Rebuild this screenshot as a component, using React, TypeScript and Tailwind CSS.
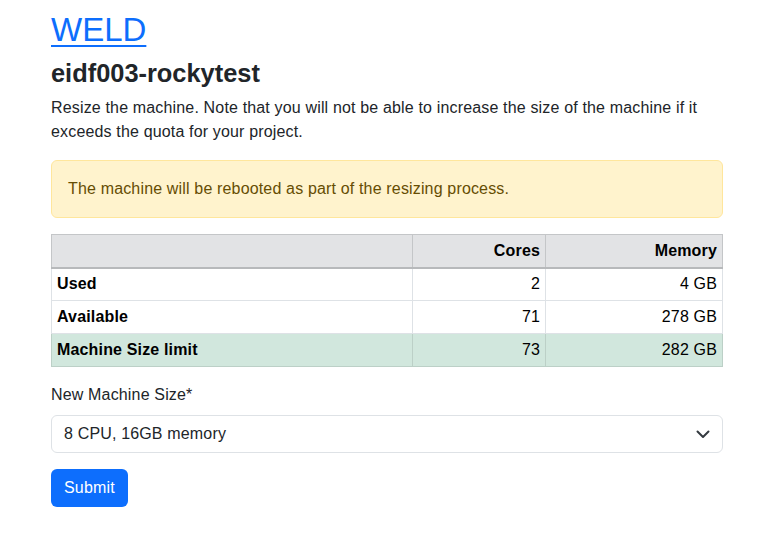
const FONT = "font-['Liberation_Sans','Noto_Sans',sans-serif]";

const rows = [
  { label: "Used", cores: "2", memory: "4 GB", highlight: false },
  { label: "Available", cores: "71", memory: "278 GB", highlight: false },
  { label: "Machine Size limit", cores: "73", memory: "282 GB", highlight: true },
];

const App = () => {
  return (
    <main className={`${FONT} min-h-screen bg-white text-[16px] leading-6 tracking-[0.16px] text-[#212529]`}>
      <div className="ml-[51px] w-[672px] pt-[10px]">
        <h1 className="mb-2 text-[33px] font-medium leading-[1.2] tracking-normal">
          <a href="#" className="text-[#0d6efd] underline decoration-[2px] underline-offset-[4px]">
            WELD
          </a>
        </h1>
        <h3 className="mb-2 text-[25.4px] font-bold leading-[1.2] tracking-normal">eidf003-rockytest</h3>
        <p className="mb-4">
          Resize the machine. Note that you will not be able to increase the size of the machine if it
          exceeds the quota for your project.
        </p>

        <div className="mb-4 rounded-[6px] border border-[#ffe69c] bg-[#fff3cd] p-4 text-[#664d03]">
          The machine will be rebooted as part of the resizing process.
        </div>

        <table className="mb-4 w-full border-collapse border border-[#b7b9bb] text-black">
          <thead>
            <tr className="bg-[#e2e3e5]">
              <th className="h-[33px] w-[361px] border border-[#c4c6c8] px-[5px]"></th>
              <th className="w-[133px] border border-[#c4c6c8] px-[5px] text-right font-bold">Cores</th>
              <th className="border border-[#c4c6c8] px-[5px] text-right font-bold">Memory</th>
            </tr>
          </thead>
          <tbody className="border-t-2 border-[#b7b9bb]">
            {rows.map((row) => (
              <tr key={row.label} className={row.highlight ? "bg-[#d1e7dd]" : "bg-white"}>
                <td
                  className={`h-[33px] border px-[5px] font-bold ${
                    row.highlight ? "border-[#bcd0c7]" : "border-[#dee2e6]"
                  }`}
                >
                  {row.label}
                </td>
                <td
                  className={`border px-[5px] text-right ${
                    row.highlight ? "border-[#bcd0c7]" : "border-[#dee2e6]"
                  }`}
                >
                  {row.cores}
                </td>
                <td
                  className={`border px-[5px] text-right ${
                    row.highlight ? "border-[#bcd0c7]" : "border-[#dee2e6]"
                  }`}
                >
                  {row.memory}
                </td>
              </tr>
            ))}
          </tbody>
        </table>

        <label className="mb-2 block">New Machine Size*</label>
        <div className="relative mb-4">
          <select
            className="h-[38px] w-full appearance-none rounded-[6px] border border-[#dee2e6] bg-white py-[6px] pl-3 pr-9 text-[16px] tracking-[0.16px] text-[#212529]"
            defaultValue="8"
          >
            <option value="8">8 CPU, 16GB memory</option>
          </select>
          <svg
            className="pointer-events-none absolute right-[13px] top-[15px]"
            width="14"
            height="9"
            viewBox="0 0 14 9"
            fill="none"
          >
            <path d="M1.5 1.5 7 7l5.5-5.5" stroke="#343a40" strokeWidth="2" strokeLinecap="round" strokeLinejoin="round" />
          </svg>
        </div>

        <button className="h-[38px] rounded-[6px] bg-[#0d6efd] px-[13px] text-white">Submit</button>
      </div>
    </main>
  );
};

export default App;
